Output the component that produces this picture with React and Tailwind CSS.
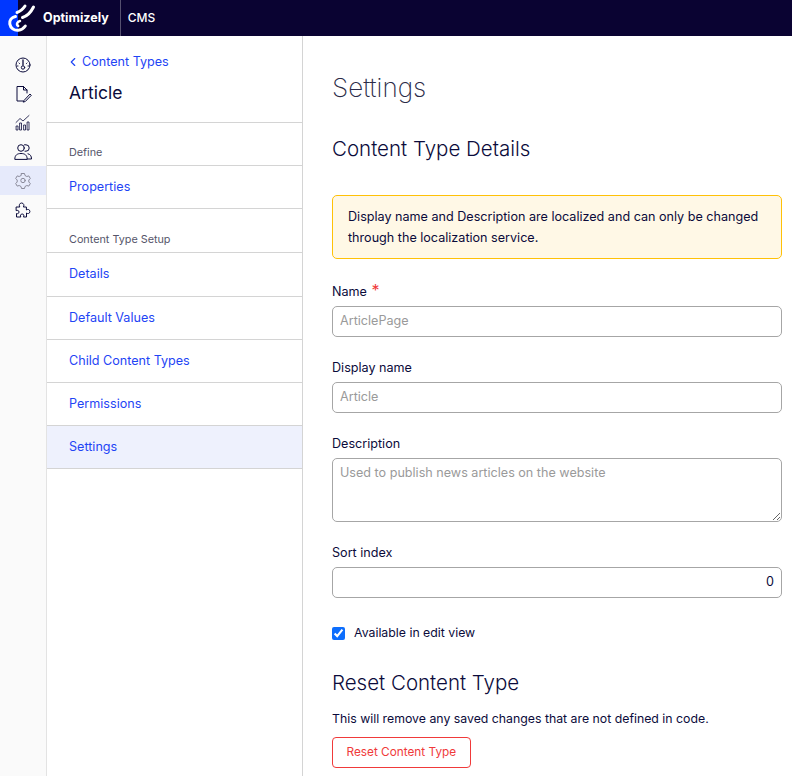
import { ChevronLeft } from 'lucide-react'

const navLink = 'flex items-center border-b border-[#d4d4d4] px-[22px] text-[12.6px] text-[#1f45f5]'
const sectionLabel = 'flex items-end border-b border-[#d4d4d4] px-[22px] pb-[4px] text-[10.800px] text-[#55556a]'
const fieldLabel = 'block text-[12.6px] leading-[18px] text-[#0b0b3b]'
const fieldInput = 'mt-[5px] block h-[31px] w-full rounded-[5px] border border-[#a6a6a6] bg-white px-[7px] pb-[2px] text-[12.6px] text-[#0b0b3b] placeholder:text-[#9a9a9a] outline-none'

function Logo() {
  return (
    <svg width="36" height="36" viewBox="0 0 36 36" fill="none" className="block">
      <rect width="18" height="36" fill="#0037ff" />
      <path d="M15.500 16.500c-4 .8-6.200 4-5.700 7.500.6 4 4.500 6.800 8.500 6.300 3.500-.4 5.500-2.200 7-4.300" stroke="#fff" strokeWidth="3" strokeLinecap="round" />
      <path d="M20 21c-2.800.5-4 3.500-1.800 5" stroke="#fff" strokeWidth="2.500" strokeLinecap="round" />
      <path d="M17 12.500c3.500-1 6-3.500 8-6.500" stroke="#fff" strokeWidth="3" strokeLinecap="round" />
      <path d="M22.500 17.500c5-1.500 8.500-5.500 11-10.500" stroke="#fff" strokeWidth="3" strokeLinecap="round" />
    </svg>
  )
}

function RailIcon({ active, children }) {
  return (
    <div className={`flex h-[29px] w-full items-center justify-center ${active ? 'bg-[#e6eafb]' : ''}`}>
      <svg width="18" height="18" viewBox="0 0 18 18" fill="none" stroke={active ? '#8a8a9a' : '#0b0b3b'} strokeWidth="1" strokeLinecap="round" strokeLinejoin="round">
        {children}
      </svg>
    </div>
  )
}

export default function App() {
  return (
    <div className="flex h-[776px] w-[792px] flex-col overflow-hidden bg-white font-['Inter',sans-serif]">
      <header className="flex h-[36px] shrink-0 items-center bg-[#0a0332] text-white">
        <Logo />
        <span className="ml-[7px] text-[12.5px] font-bold">Optimizely</span>
        <div className="ml-[11px] flex h-full items-center border-l border-[#55506f] pl-[7px] text-[12px] font-medium">CMS</div>
      </header>

      <div className="flex min-h-0 flex-1">
        <aside className="flex w-[47px] shrink-0 flex-col border-r border-[#e3e3e3] bg-[#fafafa] pt-[14px]">
          <RailIcon>
            <circle cx="9" cy="9" r="7" />
            <path d="M9 4v5" strokeWidth="1.300" />
            <circle cx="9" cy="11.500" r="1.700" />
            <path d="M5 7l.5.500M13 7l-.5.500M3.500 10h.5M14.500 10h-.5" />
          </RailIcon>
          <RailIcon>
            <path d="M9 16H3V1.500h6.500L13 5v3" />
            <path d="M9.500 1.500V5H13" />
            <path d="M10 15.500l6-6.500 1.300 1.300-6 6.200-1.800.5z" />
          </RailIcon>
          <RailIcon>
            <path d="M2 8.500l4-4 3 2.500 6-5.500" strokeWidth="0.800" />
            <rect x="2.500" y="12" width="1.500" height="4" strokeWidth="0.800" />
            <rect x="6" y="9" width="1.500" height="7" strokeWidth="0.800" />
            <rect x="10" y="11" width="1.500" height="5" strokeWidth="0.800" />
            <rect x="13.500" y="8" width="1.500" height="8" strokeWidth="0.800" />
          </RailIcon>
          <RailIcon>
            <circle cx="7" cy="5" r="3.300" />
            <path d="M.8 16c0-4 2.500-5.500 6.200-5.500s6.200 1.500 6.200 5.500z" />
            <path d="M10.500 1.800h1.500a3.200 3.200 0 0 1 0 6.400h-1" />
            <path d="M14 10.800c2.200.5 3.500 2 3.500 5.200h-4" />
          </RailIcon>
          <RailIcon active>
            <path d="M7.500 2h3l.5 2 1.800 1 2-.6 1.500 2.600-1.500 1.500v2l1.500 1.500-1.500 2.600-2-.6-1.800 1-.5 2h-3l-.5-2-1.800-1-2 .6-1.500-2.600 1.500-1.500v-2L1.700 7l1.500-2.600 2 .6 1.800-1z" transform="translate(0 -0.500)" />
            <circle cx="9" cy="8.500" r="2.200" />
          </RailIcon>
          <RailIcon>
            <path d="M2.500 6h3.300c-1-1.300-.5-4 1.800-4s2.800 2.700 1.800 4h3v3c1-1 3.500-.8 3.500 1.500S13.500 13 12.500 12v4H9.500c.8-1.500.3-3-1.300-3s-2.200 1.500-1.400 3H2.500v-3.500c1.200.5 2.500 0 2.500-1.500s-1.300-2-2.500-1.500z" />
          </RailIcon>
        </aside>

        <nav className="w-[256px] shrink-0 border-r border-[#d4d4d4]">
          <div className="h-[87px] border-b border-[#d4d4d4] px-[22px] pt-[17px]">
            <a className="flex h-[18px] items-center text-[12.6px] text-[#1f45f5]">
              <ChevronLeft size={14} strokeWidth={2} className="-ml-[3px] mr-[2px]" />
              Content Types
            </a>
            <h2 className="mt-[10px] text-[17.500px] leading-[24px] font-normal text-[#0b0b3b]">Article</h2>
          </div>
          <div className={`${sectionLabel} h-[43px]`}>Define</div>
          <a className={`${navLink} h-[43px]`}>Properties</a>
          <div className={`${sectionLabel} h-[44px]`}>Content Type Setup</div>
          <a className={`${navLink} h-[44px]`}>Details</a>
          <a className={`${navLink} h-[43px]`}>Default Values</a>
          <a className={`${navLink} h-[43px]`}>Child Content Types</a>
          <a className={`${navLink} h-[43px]`}>Permissions</a>
          <a className={`${navLink} h-[43px] bg-[#eef1fd]`}>Settings</a>
        </nav>

        <main className="min-w-0 flex-1 pr-[10px] pl-[29px]">
          <h1 className="mt-[34px] text-[26px] leading-[36px] font-extralight text-[#2b2b48]">Settings</h1>
          <h2 className="mt-[29px] text-[20.500px] leading-[28px] font-light text-[#0b0b3b]">Content Type Details</h2>

          <div className="mt-[32px] h-[64px] rounded-[5px] border border-[#ffc107] bg-[#fff8e6] px-[15px] pt-[10px] text-[12.6px] leading-[21px] text-[#0b0b3b]">
            Display name and Description are localized and can only be changed through the localization service.
          </div>

          <label className={`${fieldLabel} mt-[24px]`}>
            Name <span className="ml-[1px] text-[16px] leading-[0] text-[#f03a3a]">*</span>
          </label>
          <input className={fieldInput} placeholder="ArticlePage" />

          <label className={`${fieldLabel} mt-[22px]`}>Display name</label>
          <input className={fieldInput} placeholder="Article" />

          <label className={`${fieldLabel} mt-[22px]`}>Description</label>
          <textarea className={`${fieldInput} h-[64px] resize-y py-[5px]`} placeholder="Used to publish news articles on the website" />

          <label className={`${fieldLabel} mt-[22px]`}>Sort index</label>
          <input className={`${fieldInput} text-right`} defaultValue="0" />

          <label className="mt-[26px] flex items-center text-[12.3px] leading-[18px] text-[#0b0b3b]">
            <input type="checkbox" defaultChecked className="m-0 h-[13px] w-[13px] accent-[#0d6efd]" />
            <span className="ml-[9px]">Available in edit view</span>
          </label>

          <h2 className="mt-[27px] text-[20.500px] leading-[28px] font-light text-[#0b0b3b]">Reset Content Type</h2>
          <p className="mt-[13px] text-[12.3px] leading-[18px] text-[#0b0b3b]">This will remove any saved changes that are not defined in code.</p>
          <button className="mt-[9px] h-[31px] rounded-[4px] border border-[#f03a3a] bg-white px-[13.500px] text-[11.800px] text-[#f03a3a]">Reset Content Type</button>
        </main>
      </div>
    </div>
  )
}
